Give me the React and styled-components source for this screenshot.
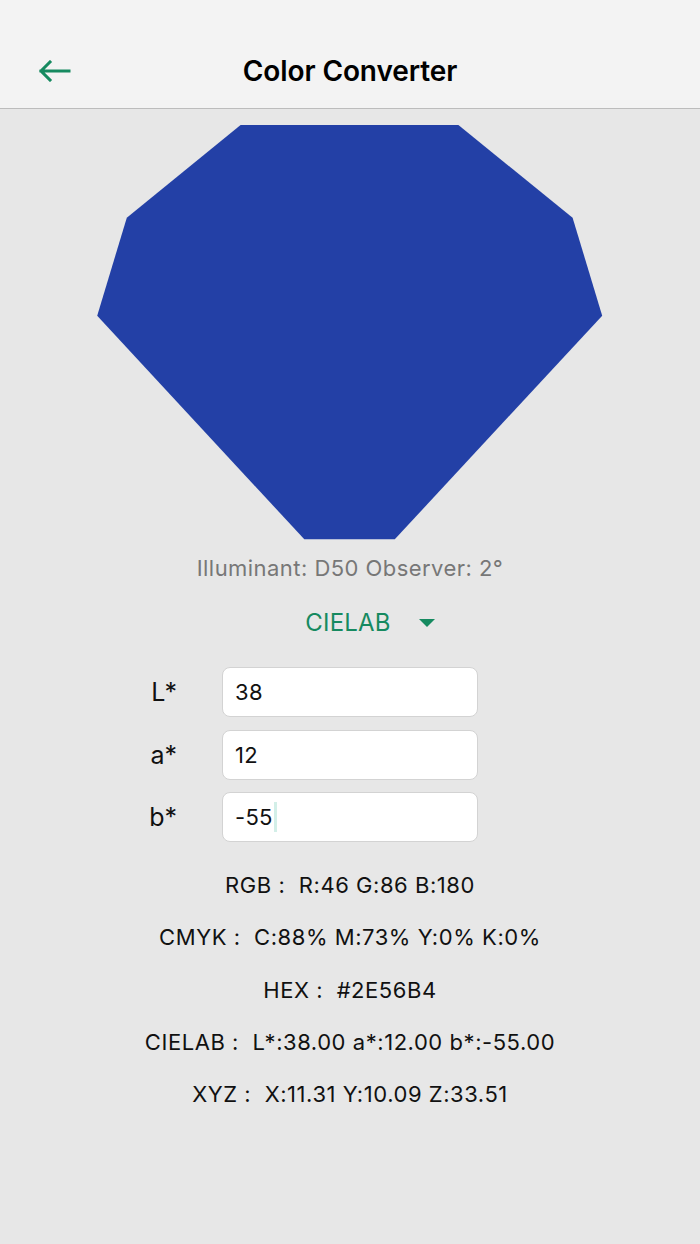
import React from "react";
import styled, { createGlobalStyle } from "styled-components";

const Global = createGlobalStyle`
  html, body { margin: 0; padding: 0; }
  body {
    background: #e7e7e7;
    font-family: Inter, "Liberation Sans", Arial, sans-serif;
    color: #111;
  }
`;

const Page = styled.div`
  width: 700px;
  min-height: 1244px;
  background: #e7e7e7;
  display: flex;
  flex-direction: column;
  align-items: center;
`;

const Header = styled.header`
  box-sizing: border-box;
  width: 100%;
  height: 109px;
  background: #f3f3f3;
  border-bottom: 1px solid #bcbcbc;
  display: grid;
  grid-template-columns: 110px 1fr 110px;
  align-items: center;
  padding-top: 34px;
`;

const BackButton = styled.button`
  border: 0;
  background: transparent;
  padding: 0 0 0 38px;
  display: flex;
  align-items: center;
  cursor: pointer;
`;

const Title = styled.h1`
  margin: 0;
  text-align: center;
  font-size: 28px;
  font-weight: 600;
  color: #000;
  letter-spacing: -0.1px;
`;

const Swatch = styled.svg`
  display: block;
  margin-top: 16px;
`;

const Illuminant = styled.div`
  margin-top: 15px;
  font-size: 22px;
  line-height: 26px;
  letter-spacing: 0.45px;
  color: #777;
`;

const ModeSelect = styled.button`
  margin-top: 27px;
  border: 0;
  background: transparent;
  display: flex;
  align-items: center;
  gap: 28px;
  padding: 0 0 0 40px;
  font-family: inherit;
  font-size: 24px;
  line-height: 30px;
  letter-spacing: 0.2px;
  color: #168a60;
  cursor: pointer;
`;

const Caret = styled.span`
  width: 0;
  height: 0;
  border-left: 8px solid transparent;
  border-right: 8px solid transparent;
  border-top: 8px solid #168a60;
`;

const Fields = styled.div`
  margin-top: 29px;
  width: 100%;
  display: grid;
  grid-template-columns: 1fr 256px 1fr;
  row-gap: 12.5px;
  align-items: center;
`;

const Label = styled.label`
  text-align: right;
  padding-right: 45px;
  font-size: 25px;
  color: #111;
`;

const Field = styled.div`
  box-sizing: border-box;
  height: 50px;
  background: #fff;
  border: 1px solid #d3d3d3;
  border-radius: 8px;
  padding: 0 12px;
  display: flex;
  align-items: center;
  font-size: 22px;
  letter-spacing: 0.3px;
  color: #111;
`;

const TextCursor = styled.span`
  display: inline-block;
  width: 3px;
  height: 30px;
  margin-left: 1px;
  background: #d3efe8;
`;

const Results = styled.div`
  margin-top: 17px;
  display: flex;
  flex-direction: column;
  align-items: center;
`;

const ResultLine = styled.div`
  font-size: 22px;
  line-height: 52.3px;
  letter-spacing: 0.55px;
  color: #111;
  white-space: pre;
`;

const points = [
  [143.6, 0],
  [361.4, 0],
  [475.6, 92.7],
  [505.2, 190.7],
  [297.8, 414.3],
  [207.3, 414.3],
  [0.2, 190.7],
  [29.8, 92.7],
]
  .map((p) => p.join(","))
  .join(" ");

const fields = [
  { label: "L*", value: "38" },
  { label: "a*", value: "12" },
  { label: "b*", value: "-55", focused: true },
];

const results = [
  "RGB :  R:46 G:86 B:180",
  "CMYK :  C:88% M:73% Y:0% K:0%",
  "HEX :  #2E56B4",
  "CIELAB :  L*:38.00 a*:12.00 b*:-55.00",
  "XYZ :  X:11.31 Y:10.09 Z:33.51",
];

export default function App() {
  return (
    <>
      <Global />
      <Page>
        <Header>
          <BackButton aria-label="Back">
            <svg width="33" height="22" viewBox="0 0 33 22" fill="none">
              <path
                d="M31 11H3M12 2L3 11l9 9"
                stroke="#168a60"
                strokeWidth="3"
                strokeLinecap="square"
              />
            </svg>
          </BackButton>
          <Title>Color Converter</Title>
          <span />
        </Header>
        <Swatch width="506" height="415" viewBox="0 0 506 415">
          <polygon points={points} fill="#2340a6" />
        </Swatch>
        <Illuminant>Illuminant: D50 Observer: 2°</Illuminant>
        <ModeSelect>
          CIELAB
          <Caret />
        </ModeSelect>
        <Fields>
          {fields.map((f) => (
            <React.Fragment key={f.label}>
              <Label>{f.label}</Label>
              <Field>
                {f.value}
                {f.focused && <TextCursor />}
              </Field>
              <span />
            </React.Fragment>
          ))}
        </Fields>
        <Results>
          {results.map((r) => (
            <ResultLine key={r}>{r}</ResultLine>
          ))}
        </Results>
      </Page>
    </>
  );
}
